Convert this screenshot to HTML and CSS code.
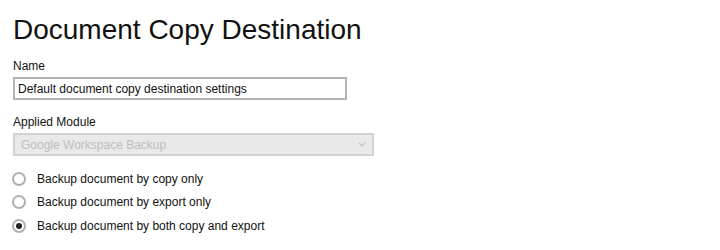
FILE: index.html
```html
<!DOCTYPE html>
<html>
<head>
<meta charset="utf-8">
<link rel="stylesheet" href="styles.css">
</head>
<body>
<main class="page">
  <h1 class="title">Document Copy Destination</h1>
  <label class="field-label" for="name">Name</label>
  <input class="text-input" id="name" type="text" value="Default document copy destination settings">
  <label class="field-label module-label" for="module">Applied Module</label>
  <div class="select-wrap">
    <select class="select" id="module" disabled>
      <option>Google Workspace Backup</option>
    </select>
    <svg class="chevron" width="8" height="5" viewBox="0 0 8 5"><path d="M0.7 0.7l3.3 3.3 3.3-3.3" fill="none" stroke="#c6c6c6" stroke-width="1.3"/></svg>
  </div>
  <div class="radios">
    <label class="radio-row"><span class="radio"></span><span class="radio-text">Backup document by copy only</span></label>
    <label class="radio-row"><span class="radio"></span><span class="radio-text">Backup document by export only</span></label>
    <label class="radio-row"><span class="radio checked"></span><span class="radio-text">Backup document by both copy and export</span></label>
  </div>
</main>
</body>
</html>
```
FILE: styles.css
```css
html, body {
  margin: 0;
  padding: 0;
  background: #ffffff;
}
body {
  font-family: "Liberation Sans", Arial, sans-serif;
  color: #111111;
}
.page {
  padding: 13px 13px 0 13px;
  display: flex;
  flex-direction: column;
  align-items: flex-start;
}
.title {
  margin: 0;
  font-size: 28px;
  font-weight: normal;
  line-height: 34px;
  color: #111;
}
.field-label {
  margin-top: 12px;
  font-size: 12px;
  line-height: 14px;
  color: #111;
}
.module-label {
  margin-top: 15px;
}
.text-input {
  margin: 4px 0 0 0;
  box-sizing: border-box;
  width: 334px;
  height: 23px;
  border: 2px solid #b3b3b3;
  padding: 0 3px;
  font-family: "Liberation Sans", Arial, sans-serif;
  font-size: 12px;
  color: #111;
  outline: none;
  background: #fff;
}
.select-wrap {
  position: relative;
  margin-top: 4px;
}
.select {
  display: block;
  appearance: none;
  -webkit-appearance: none;
  box-sizing: border-box;
  width: 361px;
  height: 23px;
  border: 2px solid #d2d2d2;
  background: #e9e9e9;
  padding: 0 6px;
  font-family: "Liberation Sans", Arial, sans-serif;
  font-size: 12px;
  color: #bdbdbd;
  border-radius: 0;
  opacity: 1;
}
.chevron {
  position: absolute;
  right: 8px;
  top: 9px;
}
.radios {
  margin-top: 11px;
  display: flex;
  flex-direction: column;
}
.radio-row {
  display: flex;
  align-items: center;
  height: 23.5px;
  font-size: 12px;
  color: #111;
}
.radio {
  box-sizing: border-box;
  width: 14px;
  height: 14px;
  border-radius: 50%;
  border: 2px solid #b0b0b0;
  background: #fff;
  margin-left: -1px;
  margin-right: 11px;
  display: flex;
  align-items: center;
  justify-content: center;
}
.radio.checked::after {
  content: "";
  width: 6px;
  height: 6px;
  border-radius: 50%;
  background: #222;
}
```
